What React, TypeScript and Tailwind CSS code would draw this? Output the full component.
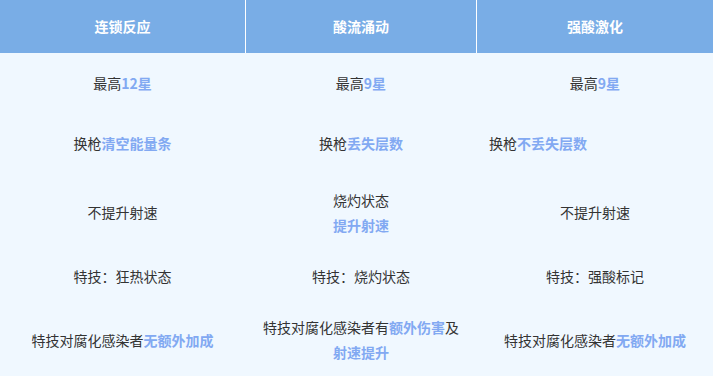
import React from 'react';

type Part = { text: string; hl?: boolean };
type Cell = { lines: Part[][]; left?: boolean };

const rows: { height: string; cells: Cell[] }[] = [
  {
    height: 'h-[60px]',
    cells: [
      { lines: [[{ text: '最高' }, { text: '12星', hl: true }]] },
      { lines: [[{ text: '最高' }, { text: '9星', hl: true }]] },
      { lines: [[{ text: '最高' }, { text: '9星', hl: true }]] },
    ],
  },
  {
    height: 'h-[60px]',
    cells: [
      { lines: [[{ text: '换枪' }, { text: '清空能量条', hl: true }]] },
      { lines: [[{ text: '换枪' }, { text: '丢失层数', hl: true }]] },
      { lines: [[{ text: '换枪' }, { text: '不丢失层数', hl: true }]], left: true },
    ],
  },
  {
    height: 'h-[79px]',
    cells: [
      { lines: [[{ text: '不提升射速' }]] },
      { lines: [[{ text: '烧灼状态' }], [{ text: '提升射速', hl: true }]] },
      { lines: [[{ text: '不提升射速' }]] },
    ],
  },
  {
    height: 'h-[49px]',
    cells: [
      { lines: [[{ text: '特技：狂热状态' }]] },
      { lines: [[{ text: '特技：烧灼状态' }]] },
      { lines: [[{ text: '特技：强酸标记' }]] },
    ],
  },
  {
    height: 'h-[78px]',
    cells: [
      { lines: [[{ text: '特技对腐化感染者' }, { text: '无额外加成', hl: true }]] },
      {
        lines: [
          [{ text: '特技对腐化感染者有' }, { text: '额外伤害', hl: true }, { text: '及' }],
          [{ text: '射速提升', hl: true }],
        ],
      },
      { lines: [[{ text: '特技对腐化感染者' }, { text: '无额外加成', hl: true }]] },
    ],
  },
];

const headers = ['连锁反应', '酸流涌动', '强酸激化'];

export default function App() {
  return (
    <div
      className="w-[713px] h-[376px] overflow-hidden bg-[#f0f8ff] text-[14px] text-[#333]"
      style={{ fontFamily: '"Noto Sans CJK SC", "Noto Sans", sans-serif' }}
    >
      <div className="grid grid-cols-[245px_231px_1fr] h-[53px] bg-[#79ade6] text-white font-bold">
        {headers.map((h, i) => (
          <div
            key={h}
            className={`flex items-center justify-center ${i > 0 ? 'border-l border-white' : ''}`}
          >
            {h}
          </div>
        ))}
      </div>

      {rows.map((row, r) => (
        <div key={r} className={`grid grid-cols-[245px_231px_1fr] ${row.height}`}>
          {row.cells.map((cell, c) => (
            <div
              key={c}
              className={`flex flex-col justify-center leading-[25px] ${
                cell.left ? 'items-start pl-[12px]' : 'items-center'
              } ${c > 0 ? 'border-l border-transparent' : ''}`}
            >
              {cell.lines.map((line, l) => (
                <div key={l}>
                  {line.map((p, k) =>
                    p.hl ? (
                      <span key={k} className="font-bold text-[#82a9f2]">
                        {p.text}
                      </span>
                    ) : (
                      <span key={k}>{p.text}</span>
                    )
                  )}
                </div>
              ))}
            </div>
          ))}
        </div>
      ))}
    </div>
  );
}
